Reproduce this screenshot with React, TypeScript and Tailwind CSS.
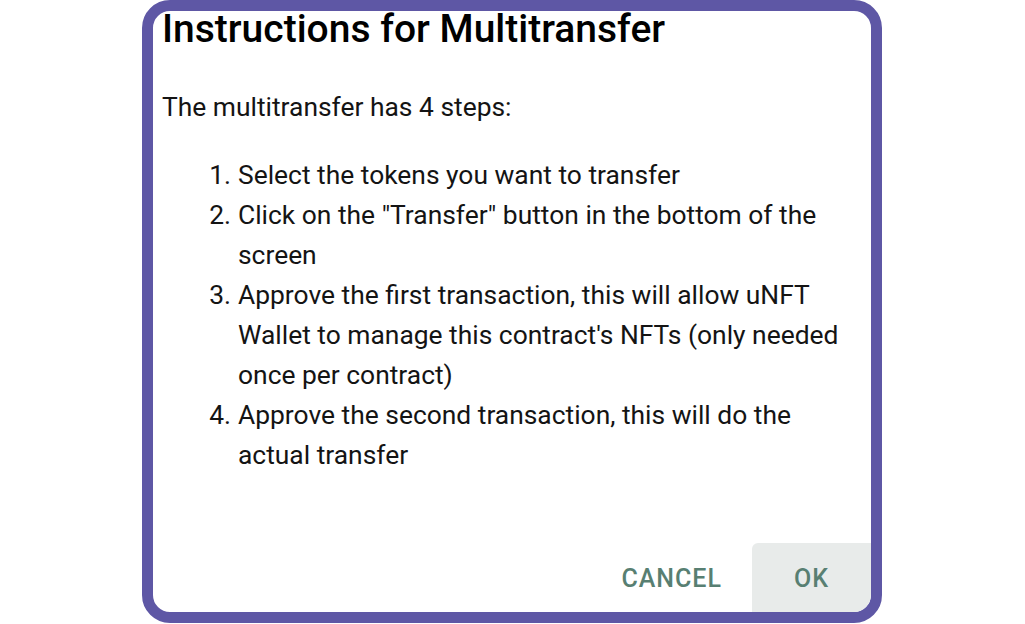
import React from "react";

const steps: string[] = [
  "Select the tokens you want to transfer",
  'Click on the "Transfer" button in the bottom of the screen',
  "Approve the first transaction, this will allow uNFT Wallet to manage this contract's NFTs (only needed once per contract)",
  "Approve the second transaction, this will do the actual transfer",
];

export default function App() {
  return (
    <div
      className="w-[1025px] h-[624px] bg-white flex justify-start overflow-hidden"
      style={{ fontFamily: "Roboto, 'Noto Sans', sans-serif" }}
    >
      <div className="ml-[142px] w-[740px] h-[623px] border-[11px] border-[#5e57a5] rounded-[28px] bg-white overflow-hidden flex flex-col">
        <h1 className="pl-[9px] text-[39px] leading-[36px] font-medium text-black">
          Instructions for Multitransfer
        </h1>
        <p className="mt-[40px] pl-[9px] text-[26.4px] leading-[40px] text-[#141414]">
          The multitransfer has 4 steps:
        </p>
        <ol className="mt-[28px] text-[26.4px] leading-[40px] text-[#141414]">
          {steps.map((s, i) => (
            <li key={i} className="flex">
              <span className="w-[85px] shrink-0 text-right pr-[7px]">{i + 1}.</span>
              <span className="w-[614px]">{s}</span>
            </li>
          ))}
        </ol>
        <div className="mt-auto flex justify-end items-stretch gap-[20px]">
          <button className="h-[69px] px-[10px] pt-[3px] text-[25px] tracking-[1px] font-medium uppercase text-[#587f72] rounded-[6px]">
            Cancel
          </button>
          <button className="h-[69px] w-[119px] pt-[3px] text-[25px] tracking-[1px] font-medium uppercase text-[#587f72] bg-[#e8ebea] rounded-tl-[6px]">
            OK
          </button>
        </div>
      </div>
    </div>
  );
}
